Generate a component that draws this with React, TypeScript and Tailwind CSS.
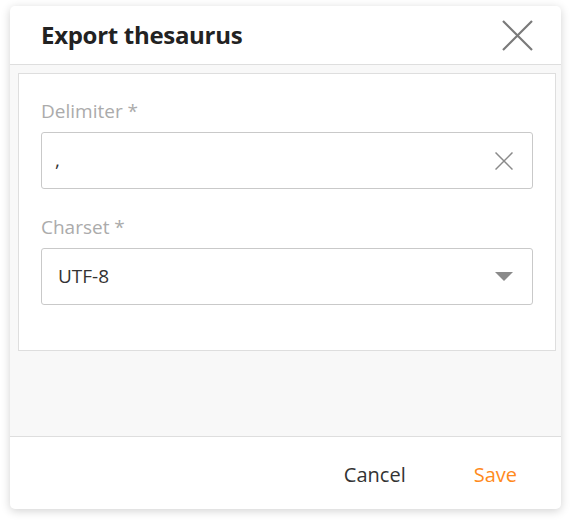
function Field({ label, children }: { label: string; children: React.ReactNode }) {
  return (
    <div className="flex flex-col">
      <label className="text-[19px] leading-[24px] text-[#ababab] mb-[9px]">{label}</label>
      {children}
    </div>
  );
}

export default function App() {
  return (
    <div className="w-[571px] h-[524px] bg-white pt-[6px] px-[10px] font-['Open_Sans',sans-serif]">
      <div className="w-[551px] h-[503px] rounded-[5px] bg-white shadow-[0_2px_10px_rgba(0,0,0,0.18)] flex flex-col overflow-hidden">
        <div className="h-[59px] flex items-center justify-between pl-[31px] pr-[28px] border-b border-[#dedede]">
          <h1 className="text-[24px] leading-[30px] font-bold text-[#222] tracking-[-0.3px]">Export thesaurus</h1>
          <button className="text-[#7a7a7a]">
            <svg width="31" height="31" viewBox="0 0 31 31">
              <path d="M1 1L30 30M30 1L1 30" stroke="currentColor" strokeWidth="2.2" />
            </svg>
          </button>
        </div>
        <div className="flex-1 bg-[#f8f8f8] pt-[8px] pl-[8px] pr-[5px]">
          <div className="h-[278px] bg-white border border-[#dedede] px-[22px] pt-[25px] flex flex-col gap-[26px]">
            <Field label="Delimiter *">
              <div className="h-[57px] rounded-[3px] border border-[#c9c9c9] flex items-center justify-between pl-[13px] pr-[19px]">
                <span className="text-[19px] text-[#333]">,</span>
                <svg width="18" height="18" viewBox="0 0 18 18">
                  <path d="M0.5 0.5L17.5 17.5M17.5 0.5L0.5 17.5" stroke="#8a8a8a" strokeWidth="1.5" />
                </svg>
              </div>
            </Field>
            <Field label="Charset *">
              <div className="h-[57px] rounded-[3px] border border-[#c9c9c9] flex items-center justify-between pl-[16px] pr-[19px]">
                <span className="text-[19px] text-[#333]">UTF-8</span>
                <svg width="18" height="9" viewBox="0 0 18 9">
                  <path d="M0 0H18L9 9Z" fill="#8a8a8a" />
                </svg>
              </div>
            </Field>
          </div>
        </div>
        <div className="h-[73px] border-t border-[#dedede] flex items-center justify-end pt-[4px] pr-[44px] gap-[68px]">
          <button className="text-[20px] text-[#333]">Cancel</button>
          <button className="text-[20px] text-[#ff8a1c]">Save</button>
        </div>
      </div>
    </div>
  );
}
